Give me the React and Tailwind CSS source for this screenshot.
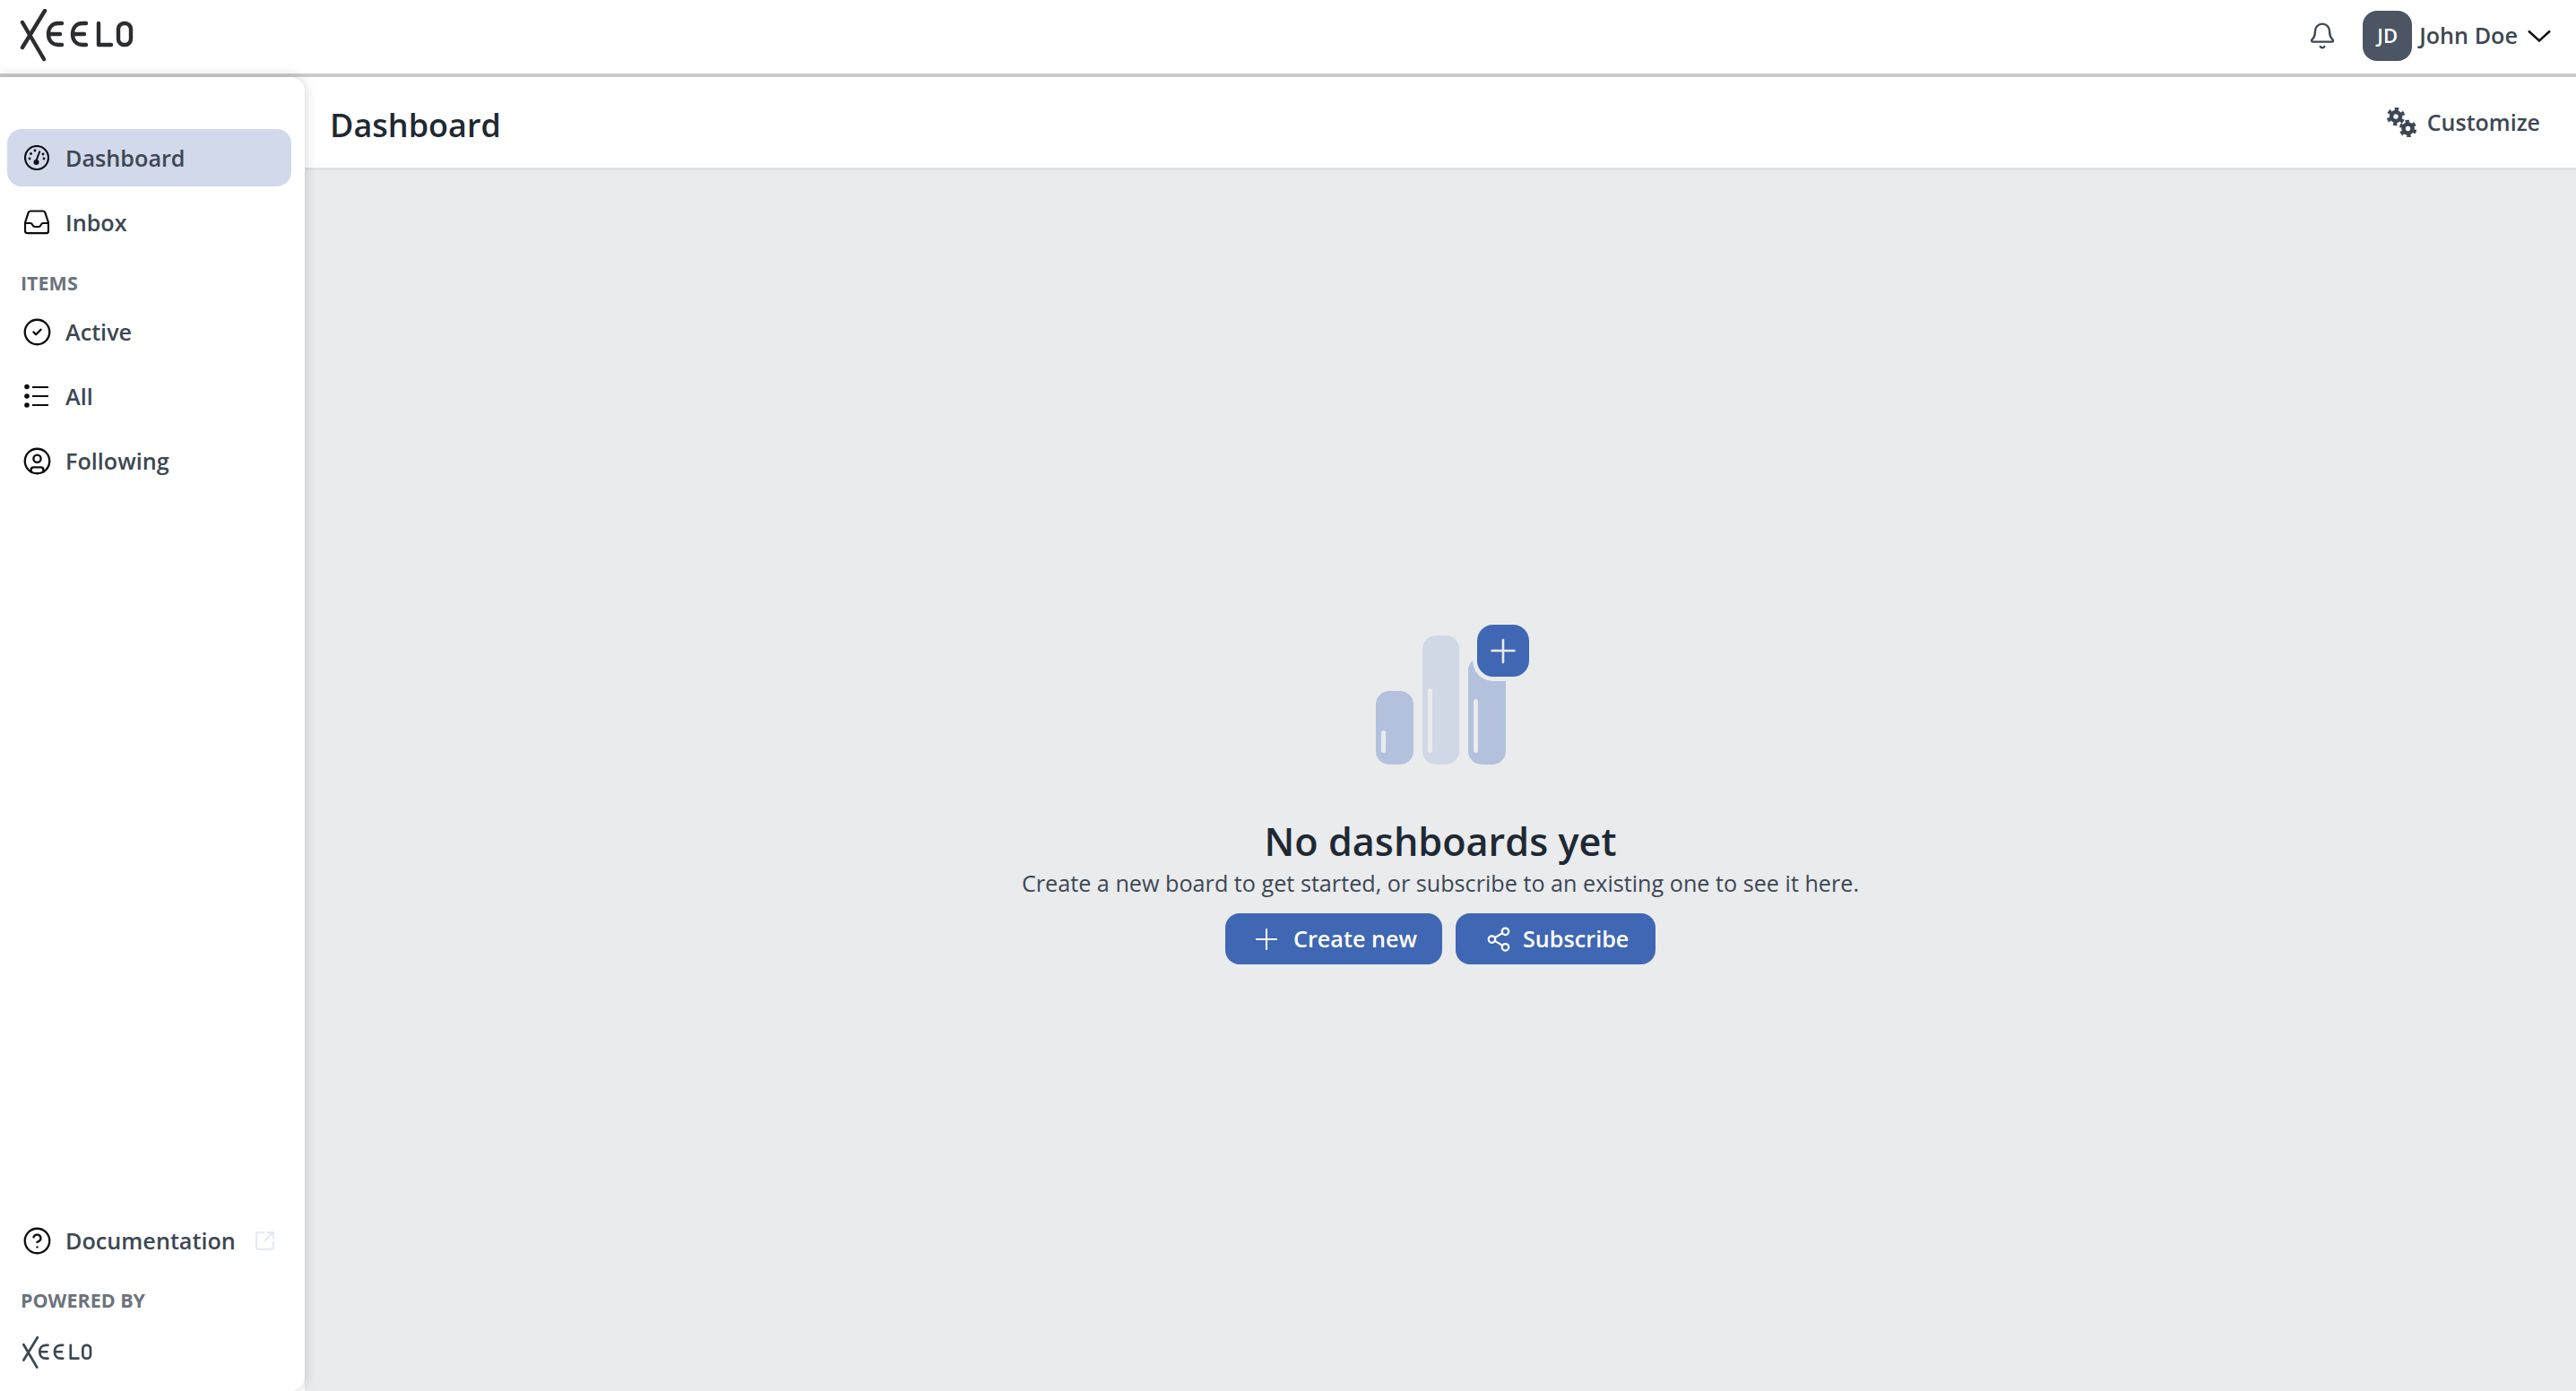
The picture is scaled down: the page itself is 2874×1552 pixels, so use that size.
import React from "react";
import { Bell, CircleCheck, CircleHelp, CircleUser, Plus, Share2, SquareArrowOutUpRight } from "lucide-react";

const Logo = ({ className, color = "#2b2d30" }) => (
  <svg viewBox="0 0 128 60" className={className} fill="none" stroke={color} strokeLinecap="round" strokeLinejoin="round" strokeWidth="4.400">
    <path d="M28 2 3 43" />
    <path d="M3 15 27 56" />
    <path d="M47 16h-4c-7 0-11 5-11 12s4 12 11 12h4M33 28h12" />
    <path d="M74 16h-4c-7 0-11 5-11 12s4 12 11 12h4M60 28h12" />
    <path d="M88 16v24h14" />
    <rect x="110" y="16" width="14" height="24" rx="6.500" />
  </svg>
);

const GaugeIcon = () => (
  <svg viewBox="0 0 28 28" className="h-7 w-7" fill="none" stroke="#0b0d10" strokeWidth="2.200">
    <circle cx="14" cy="14" r="13" />
    <path d="M13.500 17 17.500 6.500" strokeWidth="2" />
    <circle cx="13.500" cy="19" r="3" fill="#0b0d10" stroke="none" />
    <g fill="#0b0d10" stroke="none">
      <circle cx="6" cy="15" r="1.400" />
      <circle cx="7.500" cy="9.500" r="1.400" />
      <circle cx="12" cy="6" r="1.400" />
      <circle cx="21" cy="10" r="1.400" />
      <circle cx="22" cy="15" r="1.400" />
    </g>
  </svg>
);

const InboxIcon = () => (
  <svg viewBox="0 0 28 28" className="h-7 w-7" fill="none" stroke="#0b0d10" strokeWidth="2.200" strokeLinejoin="round">
    <path d="M7 1.500h14c1.200 0 2 .6 2.400 1.800L27 14.500v9c0 1.700-1 2.700-2.500 2.700h-21C2 26.200 1 25.200 1 23.500v-9L4.600 3.300C5 2.100 5.800 1.500 7 1.500Z" />
    <path d="M1.500 15H7c1 0 1.500.4 2 1.400l.6 1.200c.5 1 1.200 1.400 2.200 1.400h4.400c1 0 1.700-.4 2.200-1.400l.6-1.200c.5-1 1-1.400 2-1.400h5.500" />
  </svg>
);

const ListIcon = () => (
  <svg viewBox="0 0 28 28" className="h-7 w-7" fill="none" stroke="#0b0d10" strokeWidth="2.200">
    <path d="M9 4h18M9 14h18M9 24h18" />
    <g fill="#0b0d10" stroke="none">
      <circle cx="3" cy="3.500" r="2.800" />
      <circle cx="3" cy="14" r="2.800" />
      <circle cx="3" cy="24" r="2.800" />
    </g>
  </svg>
);

const GearsIcon = () => (
  <svg viewBox="0 0 33 33" className="h-[33px] w-[33px]" fill="none" stroke="#3d4753">
    <g transform="rotate(20 10 10)">
      <circle cx="10" cy="10" r="5" strokeWidth="4.600" />
      <circle cx="10" cy="10" r="8.500" strokeWidth="3.400" strokeDasharray="4.400 4.500" />
    </g>
    <g transform="rotate(8 23.500 23.500)">
      <circle cx="23.500" cy="23.500" r="5" strokeWidth="4.600" />
      <circle cx="23.500" cy="23.500" r="8.200" strokeWidth="3.200" strokeDasharray="4.300 4.280" />
    </g>
  </svg>
);

const Illustration = () => (
  <svg viewBox="0 0 171 156" className="ml-[26px] h-[156px] w-[171px]">
    <rect x="0" y="74" width="42" height="82" rx="15" fill="#b3c1dc" />
    <rect x="52" y="12" width="41" height="144" rx="15" fill="#d0d7e5" />
    <rect x="103" y="36" width="42" height="120" rx="15" fill="#b3c1dc" />
    <rect x="6" y="118" width="5" height="25" rx="2.500" fill="#e9ebed" />
    <rect x="58" y="71" width="5" height="72" rx="2.500" fill="#e9ebed" />
    <rect x="109" y="83" width="5" height="60" rx="2.500" fill="#e9ebed" />
    <rect x="108" y="-5" width="68" height="68" rx="23" fill="#e9ebed" />
    <rect x="113" y="0" width="58" height="58" rx="18" fill="#3f67b3" />
    <path d="M142 17v25M129.500 29h25" stroke="#e9ebed" strokeWidth="2.600" strokeLinecap="round" />
  </svg>
);

const IconBox = ({ children }) => <div className="flex h-7 w-7 shrink-0 items-center justify-center">{children}</div>;

const NavItem = ({ icon, label, active }) => (
  <div className={`flex h-16 items-center rounded-2xl pl-[19px] ${active ? "bg-[#d1d9eb]" : ""}`}>
    <IconBox>{icon}</IconBox>
    <span className="ml-[18px] pt-[2px] text-[25.200px] font-semibold text-[#3d4753]">{label}</span>
  </div>
);

const SectionLabel = ({ children, className }) => (
  <div className={`pl-[15px] text-[21.500px] font-bold leading-7 text-[#6b737e] ${className}`}>{children}</div>
);

const lucideNav = "h-[33px] w-[33px] shrink-0 text-[#0b0d10]";

export default function App() {
  return (
    <div className="flex h-[1552px] w-[2874px] flex-col overflow-hidden bg-white font-['Open_Sans',sans-serif]">
      <header className="flex h-[86px] shrink-0 items-center justify-between border-b-4 border-[#cbccce] pb-[3px] pl-[22px] pr-[28px]">
        <Logo className="h-[60px] w-[128px]" />
        <div className="flex items-center">
          <Bell className="h-[32px] w-[32px] text-[#3d4753]" strokeWidth={1.800} />
          <div className="ml-[29px] flex h-[56px] w-[55px] items-center justify-center rounded-2xl bg-[#4b5563] text-[22px] font-semibold text-white">JD</div>
          <span className="ml-2 text-[25.200px] font-semibold text-[#3d4753]">John Doe</span>
          <svg viewBox="0 0 26 14" className="ml-[11px] h-[14px] w-[26px]" fill="none" stroke="#0b0d10" strokeWidth="2.400">
            <path d="M1 1.500 13 12.500 25 1.500" />
          </svg>
        </div>
      </header>
      <div className="flex min-h-0 flex-1">
        <aside className="relative z-10 flex w-[340px] shrink-0 flex-col rounded-r-2xl bg-white pb-[24px] pl-2 pr-[15px] pt-[58px] shadow-[0_0_14px_rgba(0,0,0,0.18)]">
          <NavItem active label="Dashboard" icon={<GaugeIcon />} />
          <div className="mt-2"><NavItem label="Inbox" icon={<InboxIcon />} /></div>
          <SectionLabel className="mt-[22px]">ITEMS</SectionLabel>
          <div className="mt-[8px] flex flex-col gap-2">
            <NavItem label="Active" icon={<CircleCheck className={lucideNav} strokeWidth={1.700} />} />
            <NavItem label="All" icon={<ListIcon />} />
            <NavItem label="Following" icon={<CircleUser className={lucideNav} strokeWidth={1.700} />} />
          </div>
          <div className="mt-auto flex h-16 items-center pl-[19px]">
            <IconBox><CircleHelp className={lucideNav} strokeWidth={1.700} /></IconBox>
            <span className="ml-[18px] pt-[2px] text-[25.200px] font-semibold text-[#3d4753]">Documentation</span>
            <SquareArrowOutUpRight className="ml-[20px] h-[25px] w-[25px] text-[#e4e9f5]" strokeWidth={2} />
          </div>
          <SectionLabel className="mt-[21px]">POWERED BY</SectionLabel>
          <div className="mt-[26px] pl-[15px]">
            <Logo className="h-[37px] w-[82px]" color="#3d4753" />
          </div>
        </aside>
        <main className="flex min-w-0 flex-1 flex-col bg-[#e9ebed]">
          <div className="flex h-[104px] shrink-0 items-center justify-between border-b-[3px] border-[#dfe1e4] bg-white pl-[28px] pr-[40px]">
            <h1 className="mt-[6px] text-[36px] font-semibold text-[#1f2933]">Dashboard</h1>
            <div className="flex items-center">
              <GearsIcon />
              <span className="ml-[12px] text-[25px] font-semibold text-[#3d4753]">Customize</span>
            </div>
          </div>
          <div className="flex flex-1 flex-col items-center pt-[507px]">
            <Illustration />
            <h2 className="mt-[58px] text-[43.200px] font-semibold leading-[56px] text-[#1f2933]">No dashboards yet</h2>
            <p className="text-[25.200px] leading-[36px] text-[#3d4753]">Create a new board to get started, or subscribe to an existing one to see it here.</p>
            <div className="mt-[16px] flex gap-[15px]">
              <button className="flex h-[57px] w-[242px] items-center rounded-2xl bg-[#3f67b3] pl-[28px] text-[25.200px] font-semibold text-white">
                <div className="flex w-9 justify-center"><Plus className="h-[38px] w-[38px] shrink-0" strokeWidth={1.300} /></div>
                <span className="ml-[12px]">Create new</span>
              </button>
              <button className="flex h-[57px] w-[223px] items-center rounded-2xl bg-[#3f67b3] pl-[28px] text-[25.200px] font-semibold text-white">
                <div className="flex w-10 justify-center"><Share2 className="h-[30px] w-[30px] shrink-0" strokeWidth={1.800} /></div>
                <span className="ml-[7px]">Subscribe</span>
              </button>
            </div>
          </div>
        </main>
      </div>
    </div>
  );
}
